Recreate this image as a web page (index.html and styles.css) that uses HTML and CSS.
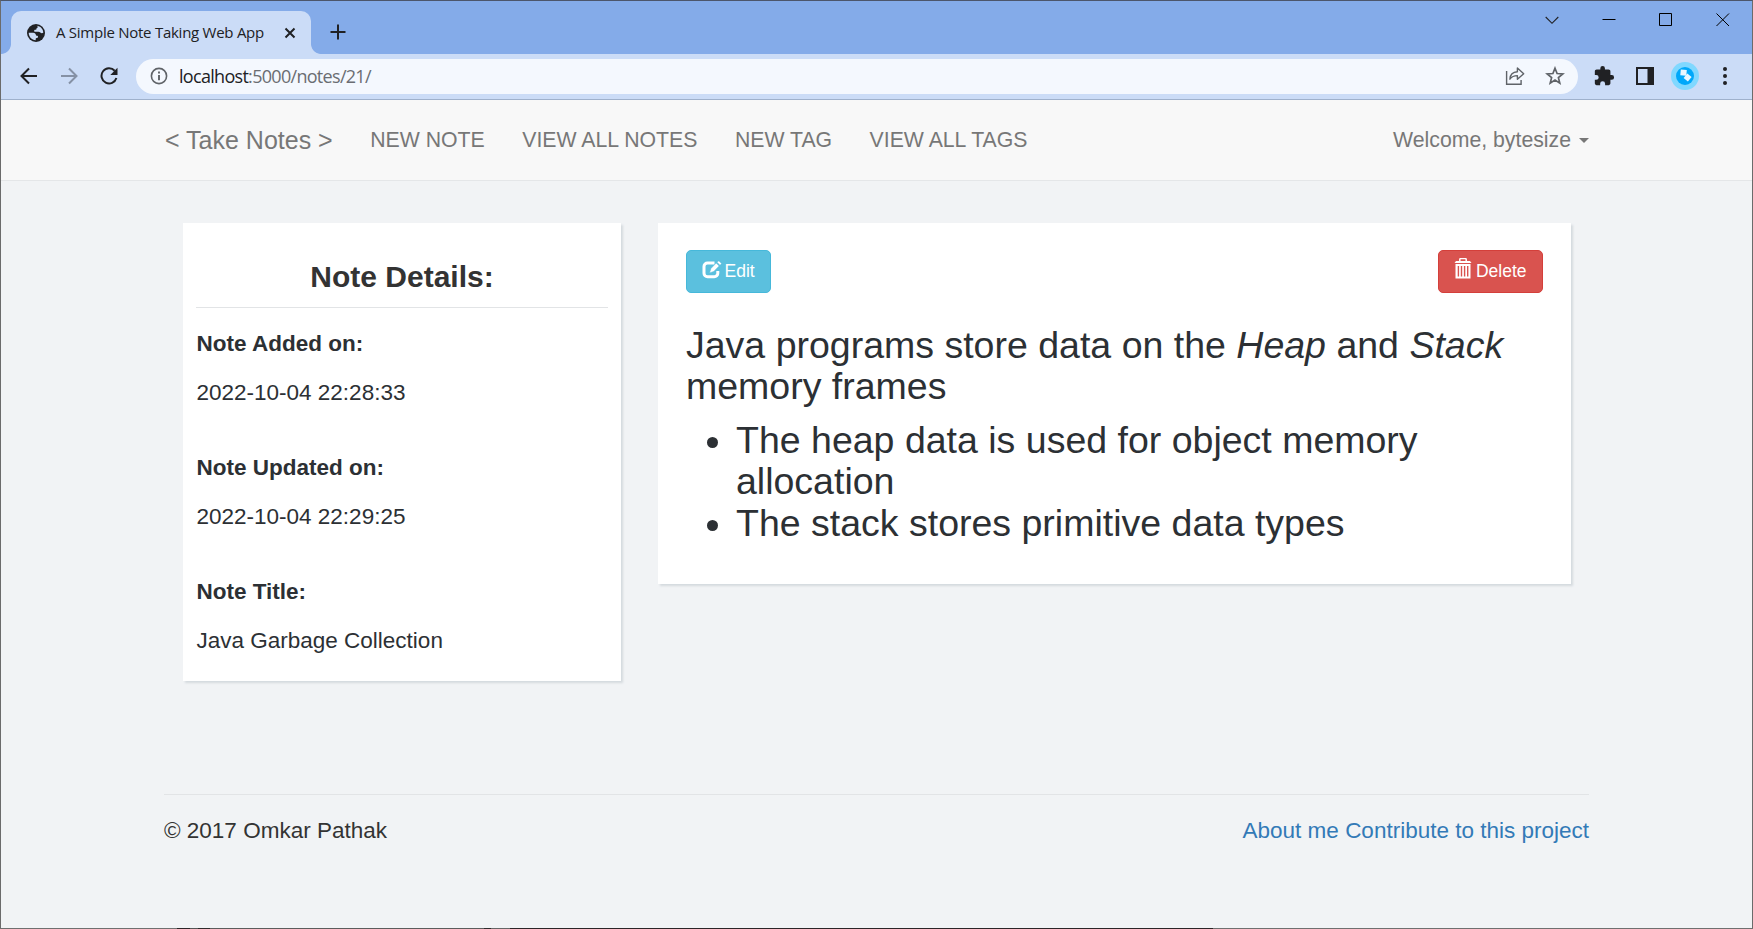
FILE: index.html
```html
<!DOCTYPE html>
<html lang="en">
<head>
<meta charset="utf-8">
<title>A Simple Note Taking Web App</title>
<link rel="stylesheet" href="styles.css">
</head>
<body>
<div class="window">
  <div class="tabstrip">
    <div class="tab">
      <svg class="favicon" width="20" height="20" viewBox="0 0 20 20"><circle cx="10" cy="10" r="9" fill="#202124"/><path d="M10.600 2.800C14.500 3 17.200 6 17.300 9.800c-1 .6-2.300.5-3-.3-.5-.6-1-.8-1.900-.8H9.200c-.8 0-1.200-.6-1-1.300.2-.6.800-.7 1.500-.7.600 0 .8-.3.800-.9 0-.7.300-1 .9-1.100.7-.2.700-1.200-.8-1.900z" fill="#cbdcf7"/><path d="M2.700 9.700h4.500c1.600 0 2.700 1 2.700 2.300 0 .5.300.7.900.7 1.100 0 1.500.7 1.200 1.500-.2.600-.6.800-1.300.8-.7 0-1 .3-1 .9v1.300C5.700 17 2.700 13.800 2.700 9.700z" fill="#cbdcf7"/></svg>
      <span class="tab-title">A Simple Note Taking Web App</span>
      <svg class="tab-close" width="12" height="12" viewBox="0 0 12 12"><path d="M1.500 1.500l9 9M10.500 1.500l-9 9" stroke="#202124" stroke-width="2"/></svg>
    </div>
    <svg class="new-tab" width="16" height="16" viewBox="0 0 16 16"><path d="M8 .5v15M.5 8h15" stroke="#202124" stroke-width="2"/></svg>
    <div class="window-controls">
      <svg width="14" height="14" viewBox="0 0 14 14"><path d="M.7 4l6.300 6.300L13.300 4" fill="none" stroke="#202124" stroke-width="1.100"/></svg>
      <svg width="14" height="14" viewBox="0 0 14 14"><path d="M.5 6.500h13" stroke="#000"/></svg>
      <svg width="14" height="14" viewBox="0 0 14 14"><path d="M.5.500h12v12H.5z" fill="none" stroke="#000"/></svg>
      <svg width="14" height="14" viewBox="0 0 14 14"><path d="M.5.500l12.500 12.500M13 .5L.5 13" stroke="#000"/></svg>
    </div>
  </div>
  <div class="toolbar">
    <svg class="back" width="18" height="18" viewBox="0 0 18 18"><path d="M17 9H2M9 1.500L1.500 9 9 16.500" fill="none" stroke="#202124" stroke-width="2"/></svg>
    <svg class="forward" width="18" height="18" viewBox="0 0 18 18"><path d="M1 9h15M9 1.500L16.500 9 9 16.500" fill="none" stroke="#8591a5" stroke-width="2"/></svg>
    <svg class="reload" width="18" height="18" viewBox="0 0 18 18"><path d="M14.700 3.700A7.600 7.600 0 1 0 16.400 11" fill="none" stroke="#202124" stroke-width="2"/><path d="M17.500.800v7.200h-7.200z" fill="#202124"/></svg>
    <div class="omnibox">
      <svg width="18" height="18" viewBox="0 0 18 18"><circle cx="9" cy="9" r="7.600" fill="none" stroke="#5f6368" stroke-width="1.600"/><path d="M9 8v5.200M9 4.600v2" stroke="#5f6368" stroke-width="1.900"/></svg>
      <span class="url"><b>localhost</b>:5000/notes/21/</span>
      <svg class="share" width="20" height="20" viewBox="0 0 20 20"><path d="M1.600 5v13.300h14.500V14" fill="none" stroke="#5f6368" stroke-width="1.400"/><path d="M4.900 13.200C5.200 8.600 7.700 6 12.400 5.800V2l6.300 5.700-6.300 5.500V9.600c-3.500 0-5.700 1-7.500 3.600z" fill="none" stroke="#5f6368" stroke-width="1.400" stroke-linejoin="round"/></svg>
      <svg class="star" width="20" height="20" viewBox="0 0 20 20"><path d="M10 2.200l2.100 5.300 5.700.4-4.400 3.700 1.400 5.600-4.800-3.100-4.800 3.100 1.400-5.600-4.400-3.700 5.700-.4z" fill="none" stroke="#5f6368" stroke-width="1.700"/></svg>
    </div>
    <svg class="puzzle" width="22" height="22" viewBox="0 0 24 24"><path d="M20.500 11H19V7c0-1.100-.9-2-2-2h-4V3.500a2.500 2.500 0 0 0-5 0V5H4c-1.100 0-2 .9-2 2v3.800h1.500a2.700 2.700 0 0 1 0 5.400H2V20c0 1.100.9 2 2 2h3.800v-1.500a2.700 2.700 0 0 1 5.400 0V22H17c1.100 0 2-.9 2-2v-4h1.500a2.500 2.500 0 0 0 0-5z" fill="#202124"/></svg>
    <svg class="panel" width="18" height="18" viewBox="0 0 18 18"><path fill-rule="evenodd" d="M0 0h18v18H0zM2 2v14h9.500V2z" fill="#202124"/></svg>
    <svg class="avatar" width="28" height="28" viewBox="0 0 28 28"><circle cx="14" cy="14" r="14" fill="#80d8ff"/><circle cx="14" cy="14" r="9" fill="#00a8fa"/><path d="M9.800 7.600l6 .5-.5 5.700-6-.5z" fill="#e9f7ff"/><path d="M16.300 11.400l4.300 3.600-3.700 4.500-4.300-3.600z" fill="#e9f7ff"/></svg>
    <svg class="dots" width="4" height="18" viewBox="0 0 4 18"><g fill="#202124"><circle cx="2" cy="2" r="2"/><circle cx="2" cy="9" r="2"/><circle cx="2" cy="16" r="2"/></g></svg>
  </div>
  <nav class="navbar">
    <div class="container nav-row">
      <a class="brand">&lt; Take Notes &gt;</a>
      <a>NEW NOTE</a>
      <a>VIEW ALL NOTES</a>
      <a>NEW TAG</a>
      <a>VIEW ALL TAGS</a>
      <a class="user">Welcome, bytesize <i class="caret"></i></a>
    </div>
  </nav>
  <main class="container columns">
    <aside class="card details">
      <h3>Note Details:</h3>
      <dl>
        <dt>Note Added on:</dt><dd>2022-10-04 22:28:33</dd>
        <dt>Note Updated on:</dt><dd>2022-10-04 22:29:25</dd>
        <dt>Note Title:</dt><dd>Java Garbage Collection</dd>
      </dl>
    </aside>
    <section class="card note">
      <div class="actions">
        <a class="btn btn-info"><svg width="20" height="18" viewBox="0 0 20 18"><path d="M12.500 2H5.500A3.500 3.500 0 0 0 2 5.500v6.700a3.500 3.500 0 0 0 3.500 3.500h6.800a3.500 3.500 0 0 0 3.500-3.500V10" fill="none" stroke="#fff" stroke-width="3"/><path d="M7.500 12l1.400-4.500L14.200 2l3 3-5.400 5.500zM15 1.300L16.200.2c.4-.3.800-.3 1.100 0l1.900 1.900c.3.300.3.700 0 1L18 4.300z" fill="#fff" stroke="#5bc0de" stroke-width=".6"/></svg><span>Edit</span></a>
        <a class="btn btn-danger"><svg width="18" height="21" viewBox="0 0 18 21"><path d="M5.800 3.200V1.600c0-.6.400-1 1-1h4.400c.6 0 1 .4 1 1v1.600" fill="none" stroke="#fff" stroke-width="1.500"/><path d="M2 3h14l1.500 2H.5z" fill="#fff"/><path fill-rule="evenodd" d="M1.500 6h15v14.500h-15zM3.700 8v10.500h1.400V8zM6.800 8v10.500h1.400V8zM9.900 8v10.500h1.400V8zM13 8v10.500h1.400V8z" fill="#fff"/></svg><span>Delete</span></a>
      </div>
      <div class="note-body">
        <p>Java programs store data on the <em>Heap</em> and <em>Stack</em> memory frames</p>
        <ul>
          <li>The heap data is used for object memory allocation</li>
          <li>The stack stores primitive data types</li>
        </ul>
      </div>
    </section>
  </main>
  <footer class="container footer">
    <span>© 2017 Omkar Pathak</span>
    <span class="links"><a>About me</a> <a>Contribute to this project</a></span>
  </footer>
</div>
<div class="bottom-edge"></div>
</body>
</html>
```
FILE: styles.css
```css
* { box-sizing: border-box; }
body { margin: 0; font-family: "Liberation Sans", Arial, sans-serif; color: #2c3034; }
svg { display: block; flex: none; }
.window { width: 1753px; height: 928px; border: 1px solid #6b6b6b; border-top-color: #4c566b; border-bottom: 0; background: #f1f3f5; overflow: hidden; display: flex; flex-direction: column; }
.bottom-edge { width: 1753px; height: 1px; background: linear-gradient(90deg, #6f6f6f 177px, #2b2527 177px 190px, #555 190px 198px, #2f2b2c 198px 210px, #5c5c5c 210px 484px, #2f2b2c 484px 491px, #666 491px 510px, #2b2527 510px 1213px, #6f6f6f 1213px); }

/* Browser frame */
.tabstrip { height: 53px; flex: none; display: flex; align-items: flex-start; background: #84abe9; }
.tab { position: relative; width: 300px; height: 43px; margin: 10px 0 0 10px; padding: 0 15px 0 15px; display: flex; align-items: center; background: #cbdcf7; border-radius: 10px 10px 0 0; }
.tab::before, .tab::after { content: ""; position: absolute; bottom: 0; width: 10px; height: 10px; }
.tab::before { left: -10px; background: radial-gradient(circle at 0 0, #84abe9 9.500px, #cbdcf7 10.300px); }
.tab::after { right: -10px; background: radial-gradient(circle at 100% 0, #84abe9 9.500px, #cbdcf7 10.300px); }
.tab-title { margin-left: 10px; width: 216px; padding-bottom: 2px; font: 15px "Open Sans", sans-serif; letter-spacing: -.26px; white-space: nowrap; color: #202124; }
.tab-close { margin-left: 14px; }
.new-tab { margin: 23px 0 0 19px; }
.window-controls { margin: 12px 22px 0 auto; display: flex; gap: 43px; }
.toolbar { height: 46px; flex: none; display: flex; align-items: center; padding: 0 0 1px 19px; background: #cbdcf7; border-bottom: 1px solid #9fb1cc; }
.forward { margin-left: 22px; }
.reload { margin-left: 22px; }
.omnibox { margin-left: 18px; width: 1442px; height: 35px; display: flex; align-items: center; padding: 0 13px 0 14px; background: #f4f8fe; border-radius: 18px; }
.url { margin-left: 11px; font: 18px "Open Sans", sans-serif; letter-spacing: -.7px; color: #6a6d72; }
.url b { font-weight: 400; color: #202124; }
.share { margin-left: auto; }
.star { margin-left: 20px; }
.puzzle { margin-left: 15px; }
.panel { margin-left: 21px; }
.avatar { margin-left: 17px; }
.dots { margin-left: 24px; }

/* Page */
.container { width: 1425px; margin: 0 auto; flex: none; }
.navbar { height: 81px; flex: none; background: #f8f8f8; border-bottom: 1px solid #e4e6e8; }
.nav-row { height: 80px; padding-left: 1px; display: flex; align-items: center; gap: 37.500px; font-size: 21.250px; color: #777; white-space: nowrap; }
.nav-row a { display: flex; align-items: center; }
.brand { font-size: 25px; padding-top: 1px; }
.user { margin-left: auto; }
.caret { margin-left: 8px; border: 5px solid transparent; border-top-color: #777; border-bottom: 0; }
.columns { margin-top: 42px; padding: 0 18.500px; display: flex; justify-content: space-between; align-items: flex-start; }
.card { background: #fff; box-shadow: 2px 2px 2px #d5dade; }
.details { width: 438px; height: 458px; padding: 0 13px; }
.details h3 { margin: 0; height: 85px; padding: 37px 0 0 1px; text-align: center; font-size: 30px; line-height: 33px; color: #333; border-bottom: 1px solid #e2e4e6; }
.details dl { margin: 20px 0 0 1px; font-size: 22.500px; }
.details dt { height: 49px; line-height: 32px; font-weight: 700; }
.details dd { margin: 0; height: 75px; line-height: 32px; }
.note { width: 913px; height: 361px; padding: 27px 28px 0; }
.actions { display: flex; justify-content: space-between; }
.btn { height: 43px; display: flex; align-items: flex-start; gap: 4px; border: 1px solid; border-radius: 5px; padding: 0 15px; font-size: 17.500px; line-height: 41px; color: #fff; }
.btn-info { gap: 3px; background: #5bc0de; border-color: #46b8da; }
.btn-info svg { margin-top: 10px; }
.btn-danger { background: #d9534f; border-color: #d43f3a; }
.btn-danger svg { margin-top: 7px; }
.note-body { margin: 32px 0 0 .5px; font-size: 37.500px; line-height: 41.250px; }
.note-body p { margin: 0 0 12.500px; }
.note-body ul { margin: 0; padding-left: 50px; }
.footer { margin-top: 113px; padding-top: 20px; border-top: 1px solid #e2e4e6; display: flex; justify-content: space-between; font-size: 22.500px; line-height: 32px; color: #333; }
.links { color: #337ab7; }
```
